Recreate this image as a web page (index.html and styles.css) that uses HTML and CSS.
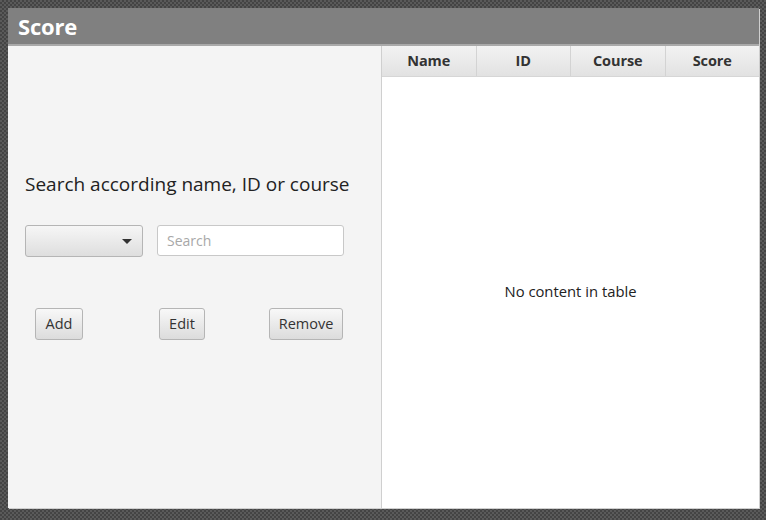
FILE: index.html
```html
<!DOCTYPE html>
<html>
<head>
<meta charset="utf-8">
<link rel="stylesheet" href="styles.css">
</head>
<body>
<div class="window">
  <div class="titlebar">Score</div>
  <div class="content">
    <div class="left">
      <div class="heading">Search according name, ID or course</div>
      <div class="search-row">
        <div class="combo"><span class="arrow"></span></div>
        <div class="input">Search</div>
      </div>
      <div class="button-row">
        <div class="btn btn-add">Add</div>
        <div class="btn btn-edit">Edit</div>
        <div class="btn btn-remove">Remove</div>
      </div>
    </div>
    <div class="table">
      <div class="thead">
        <div class="th">Name</div>
        <div class="th">ID</div>
        <div class="th">Course</div>
        <div class="th">Score</div>
      </div>
      <div class="tbody">No content in table</div>
    </div>
  </div>
</div>
</body>
</html>
```

FILE: styles.css
```css
html, body {
  margin: 0;
  padding: 0;
}
body {
  width: 766px;
  height: 520px;
  overflow: hidden;
  background-color: #4e4e4e;
  background-image: repeating-conic-gradient(#444444 0 25%, #5a5a5a 0 50%);
  background-size: 4px 4px;
  font-family: "Open Sans", "Noto Sans", sans-serif;
  padding: 8px 0 0 8px;
  box-sizing: border-box;
}
.window {
  width: 751px;
  height: 500px;
  display: flex;
  flex-direction: column;
  background: #f4f4f4;
  box-shadow: 1px 1px 0 #cfcfcf;
}
.titlebar {
  height: 36px;
  background: #808080;
  color: #fff;
  font-weight: bold;
  font-size: 22px;
  line-height: 36px;
  padding-left: 10px;
  border-bottom: 2px solid #a9a9a9;
  letter-spacing: -0.2px;
}
.content {
  flex: 1;
  display: flex;
}
.left {
  width: 374px;
  background: #f4f4f4;
  border-right: 1px solid #cfcfcf;
  padding: 126px 0 0 17px;
  box-sizing: border-box;
}
.heading {
  font-size: 19px;
  color: #222;
  letter-spacing: 0;
  line-height: 24px;
}
.search-row {
  display: flex;
  margin-top: 29px;
  gap: 14px;
}
.combo {
  width: 118px;
  height: 32px;
  box-sizing: border-box;
  border: 1px solid #b5b5b5;
  border-radius: 3px;
  background: linear-gradient(#f6f6f6, #dedede);
  position: relative;
}
.arrow {
  position: absolute;
  right: 10px;
  top: 13px;
  width: 0;
  height: 0;
  border-left: 5px solid transparent;
  border-right: 5px solid transparent;
  border-top: 5px solid #333;
}
.input {
  width: 187px;
  height: 31px;
  box-sizing: border-box;
  border: 1px solid #c8c8c8;
  border-radius: 3px;
  background: #fff;
  color: #a8a8a8;
  font-size: 14px;
  line-height: 29px;
  padding-left: 9px;
  letter-spacing: 0;
}
.button-row {
  display: flex;
  margin-top: 51px;
  padding-left: 10px;
}
.btn {
  height: 32px;
  box-sizing: border-box;
  border: 1px solid #b5b5b5;
  border-radius: 3px;
  background: linear-gradient(#f8f8f8, #dcdcdc);
  font-size: 14.5px;
  color: #333;
  line-height: 30px;
  text-align: center;
  letter-spacing: 0;
}
.btn-add { width: 48px; }
.btn-edit { width: 46px; margin-left: 76px; }
.btn-remove { width: 74px; margin-left: 64px; }
.table {
  flex: 1;
  background: #fff;
  display: flex;
  flex-direction: column;
}
.thead {
  display: flex;
  height: 31px;
  background: linear-gradient(#f2f2f2, #e2e2e2);
  border-bottom: 1px solid #d6d6d6;
  box-sizing: border-box;
}
.th {
  flex: 1;
  text-align: center;
  font-weight: bold;
  font-size: 14.5px;
  color: #333;
  line-height: 30px;
  border-right: 1px solid #d3d3d3;
  letter-spacing: -0.1px;
}
.th:last-child {
  border-right: none;
}
.tbody {
  flex: 1;
  display: flex;
  align-items: center;
  justify-content: center;
  font-size: 14.8px;
  color: #222;
  letter-spacing: 0;
  padding-bottom: 4px;
}
```
